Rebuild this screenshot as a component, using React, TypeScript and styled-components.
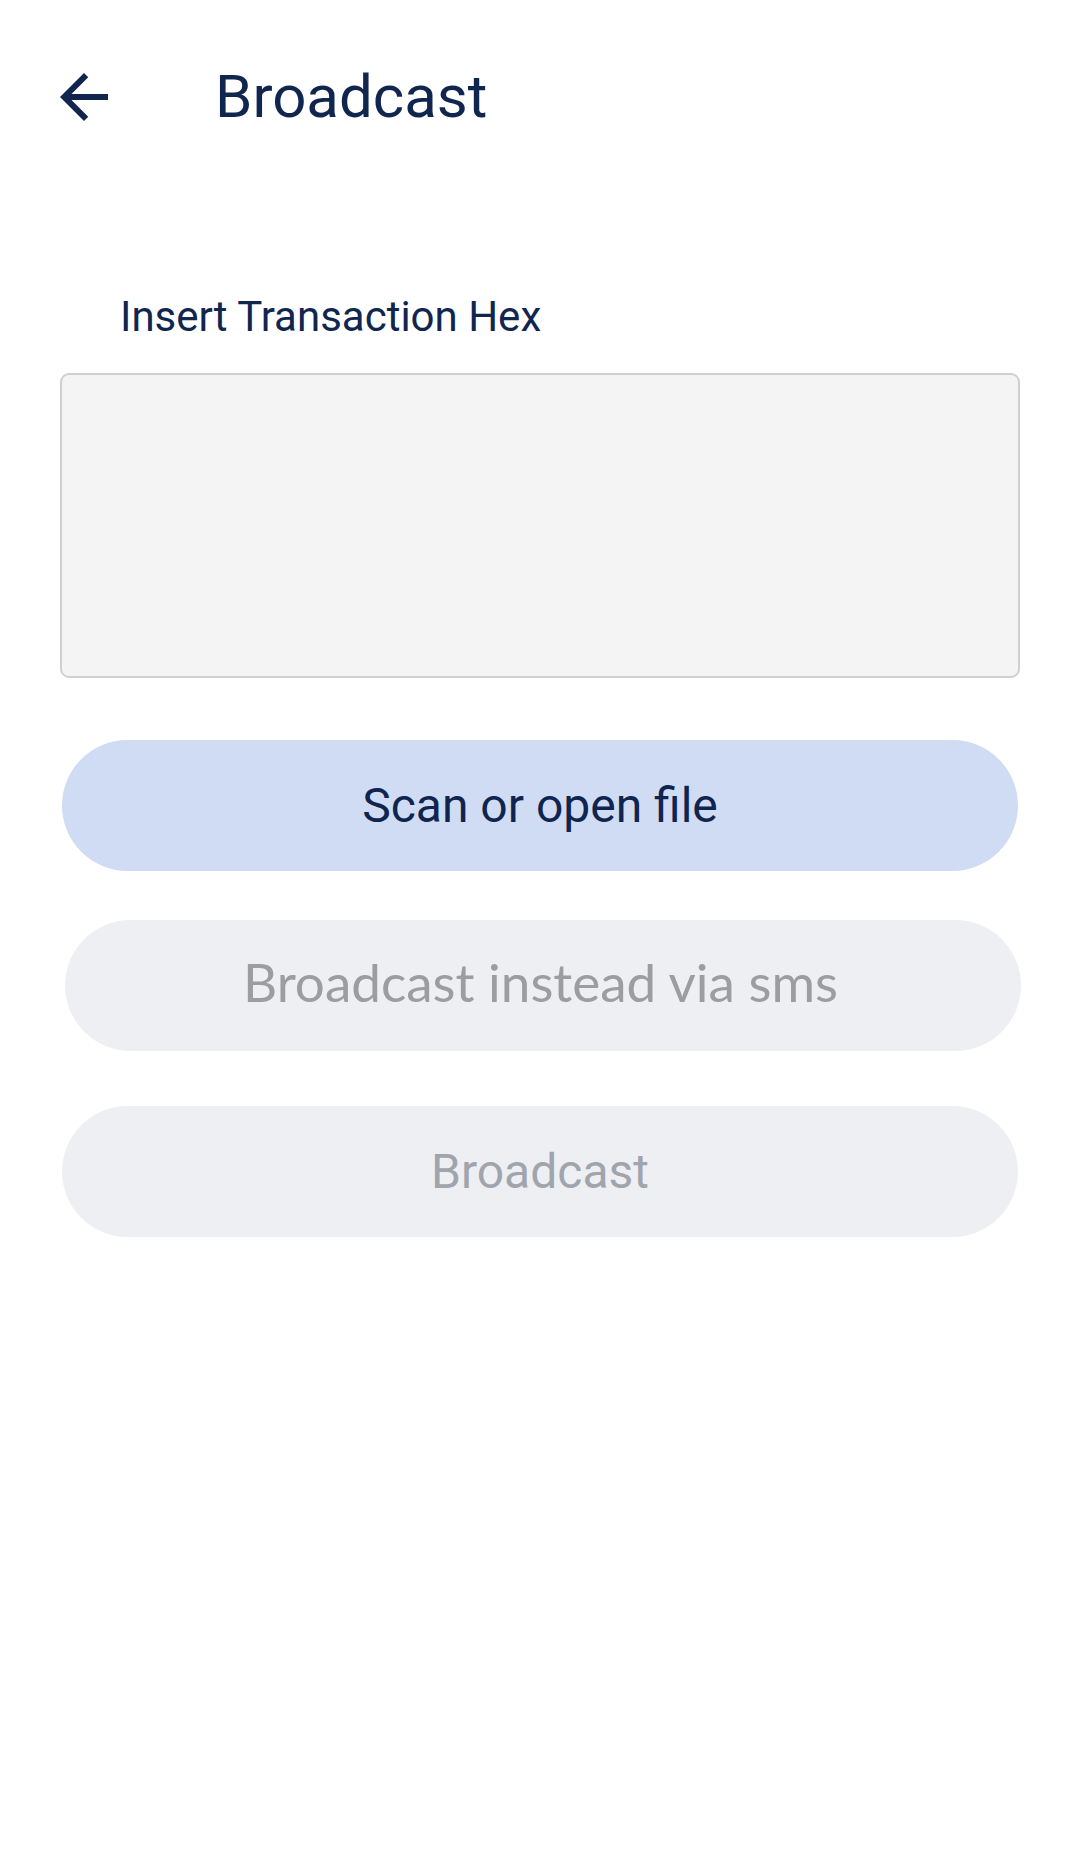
import React from "react";
import styled, { createGlobalStyle } from "styled-components";

const GlobalStyle = createGlobalStyle`
  html, body {
    margin: 0;
    padding: 0;
    background: #ffffff;
  }
  body {
    font-family: Roboto, "Liberation Sans", Arial, sans-serif;
    -webkit-font-smoothing: antialiased;
  }
  * { box-sizing: border-box; }
`;

const Screen = styled.div`
  width: 1080px;
  min-height: 1858px;
  background: #ffffff;
  display: flex;
  flex-direction: column;
`;

const Header = styled.header`
  display: flex;
  align-items: center;
  height: 72px;
  margin-top: 61px;
  padding-left: 48px;
`;

const BackButton = styled.button`
  width: 72px;
  height: 72px;
  padding: 0;
  border: none;
  background: transparent;
  color: #11264f;
  display: flex;
  align-items: center;
  justify-content: center;
  cursor: pointer;
`;

const Title = styled.h1`
  margin: 0 0 0 95px;
  font-family: Roboto, "Liberation Sans", sans-serif;
  font-weight: 400;
  font-size: 60px;
  line-height: 1;
  color: #11264f;
`;

const Content = styled.main`
  display: flex;
  flex-direction: column;
  padding: 163px 60px 0 60px;
`;

const Label = styled.label`
  margin-left: 60px;
  font-family: Roboto, "Liberation Sans", sans-serif;
  font-size: 42px;
  line-height: 1;
  color: #11264f;
`;

const HexInput = styled.textarea`
  margin-top: 35px;
  width: 960px;
  height: 305px;
  border: 2px solid #d0d0d0;
  border-radius: 9px;
  background: #f4f4f4;
  resize: none;
  outline: none;
  padding: 16px;
  font-family: Roboto, sans-serif;
  font-size: 40px;
  color: #11264f;
`;

type Variant = "primary" | "sms" | "disabled";

const PillButton = styled.button<{ $variant: Variant; $offset: number; $top: number }>`
  margin-top: ${(p) => p.$top}px;
  margin-left: ${(p) => p.$offset}px;
  width: 956px;
  height: 131px;
  border: none;
  border-radius: 66px;
  display: flex;
  align-items: center;
  justify-content: center;
  padding: ${(p) => (p.$variant === "sms" ? "0 5px 9px 0" : "0")};
  background: ${(p) => (p.$variant === "primary" ? "#cfdcf4" : "#eeeff3")};
  color: ${(p) =>
    p.$variant === "primary" ? "#0f2550" : p.$variant === "sms" ? "#9d9d9f" : "#a0a5ad"};
  font-family: ${(p) =>
    p.$variant === "sms"
      ? 'Lato, "Open Sans", sans-serif'
      : 'Roboto, "Liberation Sans", sans-serif'};
  font-size: ${(p) => (p.$variant === "sms" ? 53 : 48)}px;
  font-weight: 400;
  line-height: 1;
  cursor: pointer;
`;

const ArrowBack = () => (
  <svg width="72" height="72" viewBox="0 0 24 24" fill="currentColor" aria-hidden="true">
    <path d="M20 11H7.83l5.59-5.59L12 4l-8 8 8 8 1.41-1.41L7.83 13H20v-2z" />
  </svg>
);

export default function App() {
  return (
    <>
      <GlobalStyle />
      <Screen>
        <Header>
          <BackButton aria-label="Back">
            <ArrowBack />
          </BackButton>
          <Title>Broadcast</Title>
        </Header>
        <Content>
          <Label htmlFor="hex">Insert Transaction Hex</Label>
          <HexInput id="hex" />
          <PillButton $variant="primary" $offset={2} $top={62}>
            Scan or open file
          </PillButton>
          <PillButton $variant="sms" $offset={5} $top={49}>
            Broadcast instead via sms
          </PillButton>
          <PillButton $variant="disabled" $offset={2} $top={55}>
            Broadcast
          </PillButton>
        </Content>
      </Screen>
    </>
  );
}
